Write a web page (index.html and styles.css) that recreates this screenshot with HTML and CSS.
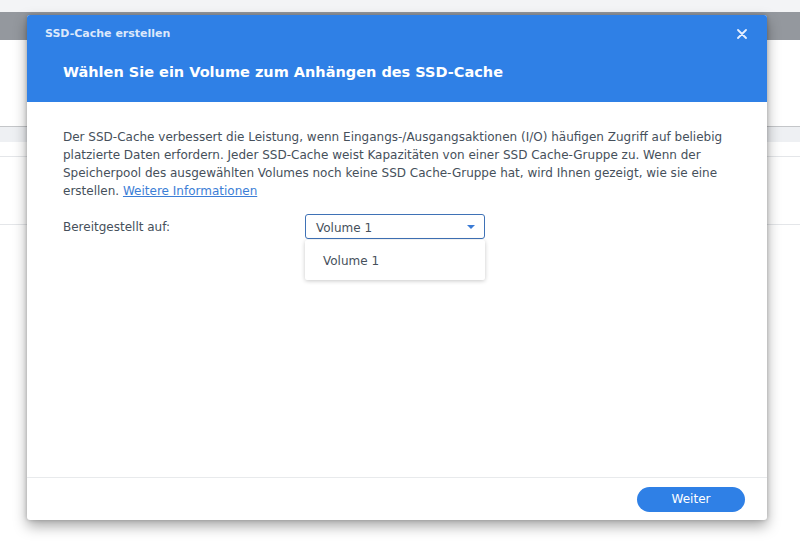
FILE: index.html
```html
<!DOCTYPE html>
<html lang="de">
<head>
    <meta charset="UTF-8">
    <title>SSD-Cache erstellen</title>
    <link rel="stylesheet" href="styles.css">
</head>
<body>
    <div class="page">
        <div class="page-top"></div>
        <div class="page-bar"></div>
        <div class="page-head"></div>
        <div class="page-tabs"></div>
        <div class="page-row"></div>
        <div class="page-row tall"></div>
    </div>

    <div class="dialog">
        <div class="dialog-header">
            <div class="dialog-caption">
                <span>SSD-Cache erstellen</span>
                <svg class="close" width="10" height="10" viewBox="0 0 10 10">
                    <path d="M1 1L9 9M9 1L1 9" stroke="#e6efff" stroke-width="1.8" stroke-linecap="round"/>
                </svg>
            </div>
            <div class="dialog-title">Wählen Sie ein Volume zum Anhängen des SSD-Cache</div>
        </div>
        <div class="dialog-body">
            <p class="intro">Der SSD-Cache verbessert die Leistung, wenn Eingangs-/Ausgangsaktionen (I/O) häufigen Zugriff auf beliebig platzierte Daten erfordern. Jeder SSD-Cache weist Kapazitäten von einer SSD Cache-Gruppe zu. Wenn der Speicherpool des ausgewählten Volumes noch keine SSD Cache-Gruppe hat, wird Ihnen gezeigt, wie sie eine erstellen. <a href="#">Weitere Informationen</a></p>
            <div class="field">
                <label>Bereitgestellt auf:</label>
                <div class="combo">
                    <div class="combo-box">
                        <span>Volume 1</span>
                        <span class="caret"></span>
                    </div>
                    <ul class="combo-list">
                        <li>Volume 1</li>
                    </ul>
                </div>
            </div>
        </div>
        <div class="dialog-footer">
            <button>Weiter</button>
        </div>
    </div>
</body>
</html>
```

FILE: styles.css
```css
* {
    margin: 0;
    padding: 0;
    box-sizing: border-box;
}
body {
    width: 800px;
    height: 555px;
    overflow: hidden;
    background: #fff;
    font-family: "DejaVu Sans", Verdana, sans-serif;
    position: relative;
}

/* page behind the modal */
.page-top {
    height: 12px;
    background: #f3f4f6;
}
.page-bar {
    height: 28px;
    background: #94989e;
}
.page-head {
    height: 87px;
    background: #fff;
    border-bottom: 1px solid #c4c6c9;
}
.page-tabs {
    height: 15px;
    background: #eef0f3;
}
.page-row {
    height: 15px;
    border-bottom: 1px solid #e4e6e9;
}
.page-row.tall {
    height: 68px;
}

/* modal */
.dialog {
    position: absolute;
    left: 27px;
    top: 15px;
    width: 740px;
    height: 505px;
    background: #fff;
    border-radius: 3px;
    box-shadow: 0 6px 14px rgba(0,0,0,0.35), 0 0 4px rgba(0,0,0,0.2);
    display: flex;
    flex-direction: column;
}
.dialog-header {
    background: #2f80e6;
    height: 87px;
    border-radius: 3px 3px 0 0;
    padding: 11px 20px 0 18px;
}
.dialog-caption {
    display: flex;
    justify-content: space-between;
    align-items: center;
    font-size: 11px;
    font-weight: bold;
    color: #dce8fb;
    height: 14px;
}
.close {
    margin-top: 1px;
}
.dialog-title {
    margin: 24px 0 0 18px;
    font-size: 14.5px;
    font-weight: bold;
    color: #fff;
}
.dialog-body {
    flex: 1;
    padding: 26px 36px 0;
    color: #46505b;
}
.intro {
    font-size: 12px;
    line-height: 18px;
}
.intro a {
    color: #3c7ed6;
    text-decoration: underline;
}
.field {
    display: flex;
    align-items: flex-start;
    margin-top: 14px;
    font-size: 12px;
}
.field label {
    width: 242px;
    line-height: 26px;
}
.combo {
    position: relative;
    width: 180px;
}
.combo-box {
    height: 25px;
    border: 1px solid #3f72b6;
    border-radius: 3px;
    display: flex;
    align-items: center;
    justify-content: space-between;
    padding: 2px 10px 0;
}
.caret {
    width: 0;
    height: 0;
    border-left: 4px solid transparent;
    border-right: 4px solid transparent;
    border-top: 4px solid #3a7bd5;
    margin: -2px -1px 0 0;
}
.combo-list {
    position: absolute;
    top: 26px;
    left: 0;
    width: 180px;
    list-style: none;
    background: #fff;
    box-shadow: 0 1px 4px rgba(0,0,0,0.22);
    border-radius: 2px;
    padding: 11px 18px 9px;
    line-height: 20px;
}
.dialog-footer {
    height: 43px;
    border-top: 1px solid #e8eaec;
    display: flex;
    justify-content: flex-end;
    align-items: center;
    padding: 0 22px;
}
button {
    width: 108px;
    height: 25px;
    border: none;
    border-radius: 13px;
    background: #2f80e6;
    color: #fff;
    font-family: "DejaVu Sans", sans-serif;
    font-size: 12px;
    font-weight: normal;
    cursor: pointer;
}
```
